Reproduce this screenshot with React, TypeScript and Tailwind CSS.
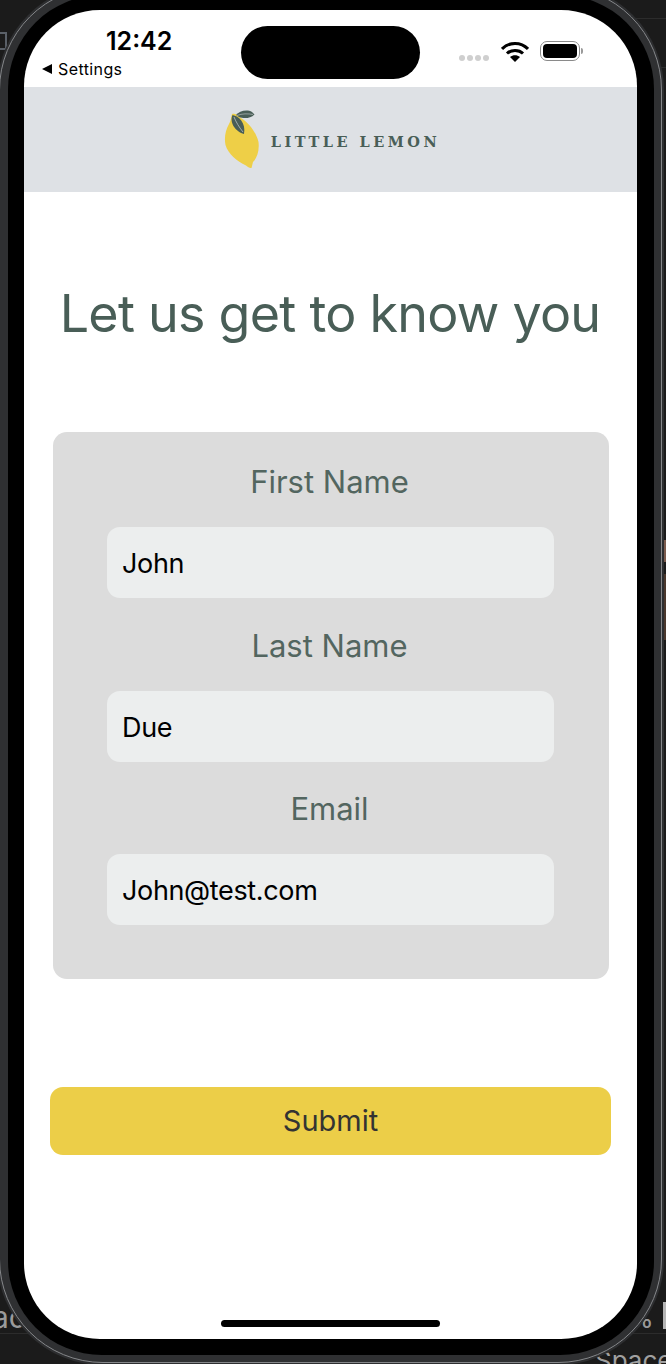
const sans = 'font-["Inter","Liberation_Sans",sans-serif]'

function Lemon() {
  return (
    <svg width="36" height="60" viewBox="0 0 36 60" className="block">
      <path
        d="M8 4 C11 3 14 5 17 8 C25 13 32 22 34.500 32 C35.500 41 33 48 29 52 L27.500 58 C25.500 58.500 24 57 22 55.500 C13 51 4 44 1.500 35 C0 28 1.500 20 5 14 C7 11 7 7 8 4 Z"
        fill="#eecf47"
      />
      <path d="M8.500 5 C15 6 22 13 20 24 C12 22 5 13 8.500 5 Z" fill="#495e57" />
      <path d="M12 5 C15 1 23 -1 28 2 L30.500 4.500 C26 9 19 8.500 15 7 Z" fill="#495e57" />
      <path d="M10 7 C12 12 15 17 19 22" stroke="#dee1e5" strokeWidth="0.600" fill="none" />
      <path d="M13 5.500 C18 3.500 24 3.500 29 4.500" stroke="#dee1e5" strokeWidth="0.500" fill="none" />
    </svg>
  )
}

function Field({ label, value }: { label: string; value: string }) {
  return (
    <div className="flex flex-col items-center">
      <div className="h-[39px] pr-[2px] text-[31px] leading-[39px] text-[#536660]">{label}</div>
      <div className="mt-[26px] flex h-[71px] w-[447px] items-center rounded-[13px] bg-[#eceeee] pl-[15px] pt-[4px] text-[27px] tracking-[-0.350px] text-black">
        {value}
      </div>
    </div>
  )
}

export default function App() {
  return (
    <div className={`relative h-[1364px] w-[666px] overflow-hidden bg-[#1b1b1b] ${sans}`}>
      {/* bits of the desktop showing round the phone */}
      <div className="absolute bottom-[30px] left-0 right-0 h-px bg-[#2c2c2c]" />
      <div className="absolute right-0 top-[18px] h-px w-[40px] bg-[#2c2c2c]" />
      <div className="absolute right-0 top-[67px] h-px w-[30px] bg-[#2c2c2c]" />
      <div className="absolute left-[-4px] top-[32px] h-[18px] w-[11px] border-2 border-[#5a6068]" />
      <div className="absolute left-[-8px] top-[1299px] text-[30px] leading-[36px] text-[#9a9a9a]">ac</div>
      <div className="absolute right-[12px] top-[1300px] text-[28px] leading-[36px] text-[#9a9a9a]">%</div>
      <div className="absolute right-0 top-[1302px] h-[27px] w-[3px] bg-[#b5b5b5]" />
      <div className="absolute left-[595px] top-[1343px] text-[26px] leading-[36px] text-[#a0a0a0]">Space</div>
      <div className="absolute right-0 top-[540px] h-[22px] w-[2px] bg-[#7a5a4c]" />
      <div className="absolute right-0 top-[574px] h-[66px] w-[2px] bg-[#4a372c]" />

      {/* phone shell, sits over the desktop behind it */}
      <div className="absolute left-[-3px] top-[-16px] h-[1381px] w-[667px] rounded-[106px] bg-[#2d2e30] p-[2px]">
        <div className="h-full w-full rounded-[104px] border-[1.500px] border-[#85878a] bg-[#2f3032] p-[7.500px]">
          <div className="h-full w-full rounded-[94px] bg-black" />
        </div>
      </div>

      <div className="absolute left-[24px] top-[10px] flex h-[1329px] w-[613px] flex-col overflow-hidden rounded-[76px] bg-white">
        <div className="relative h-[77px] shrink-0">
          <div className="absolute left-[82px] top-[15px] text-[25px] font-semibold leading-[32px] text-black">12:42</div>
          <div className="absolute left-[18px] top-[49px] flex items-center gap-[6px] text-[16px] leading-[20px] tracking-[0.400px] text-black">
            <span className="h-0 w-0 border-y-[5px] border-r-[10px] border-y-transparent border-r-black" />
            Settings
          </div>
          <div className="absolute left-[217px] top-[16px] h-[53px] w-[179px] rounded-full bg-black" />
          <div className="absolute left-[435px] top-[45px] flex gap-[2px]">
            <span className="size-[6px] rounded-full bg-[#cfcfcf]" />
            <span className="size-[6px] rounded-full bg-[#cfcfcf]" />
            <span className="size-[6px] rounded-full bg-[#cfcfcf]" />
            <span className="size-[6px] rounded-full bg-[#cfcfcf]" />
          </div>
          <svg width="28" height="21" viewBox="0 0 28 21" className="absolute left-[477px] top-[31px]">
            <path d="M1 8 C8 0.500 20 0.500 27 8" stroke="#000" strokeWidth="3" fill="none" />
            <path d="M6 12.500 C10 8.500 18 8.500 22 12.500" stroke="#000" strokeWidth="3" fill="none" />
            <path d="M9 16 L14 21 L19 16 C16 13.500 12 13.500 9 16 Z" fill="#000" />
          </svg>
          <div className="absolute left-[516px] top-[31px] flex h-[20px] w-[40px] items-center justify-center rounded-[7px] border-[1.500px] border-[#8a8a8a] p-[2px]">
            <div className="h-full w-full rounded-[4px] bg-black" />
          </div>
          <div className="absolute left-[557px] top-[38px] h-[6px] w-[2px] rounded-r-full bg-[#9a9a9a]" />
        </div>

        <header className="flex h-[105px] shrink-0 items-center justify-center gap-[11px] bg-[#dee1e5] pl-[3px]">
          <Lemon />
          <span className='pt-[5px] font-["DejaVu_Serif",serif] text-[14.500px] font-bold tracking-[3.500px] text-[#495e57]'>
            LITTLE LEMON
          </span>
        </header>

        <h1 className="mt-[85px] h-[74px] pr-[1px] text-center text-[52px] font-normal leading-[74px] tracking-[-0.750px] text-[#495e57]">
          Let us get to know you
        </h1>

        <form className="ml-[28.500px] mr-[28.500px] mt-[81px] flex h-[547px] flex-col gap-[27.500px] rounded-[14px] bg-[#dcdcdc] pt-[30px]">
          <Field label="First Name" value="John" />
          <Field label="Last Name" value="Due" />
          <Field label="Email" value="John@test.com" />
        </form>

        <button className="mx-[26px] mt-[108px] h-[68px] rounded-[13px] bg-[#ecce48] text-[29px] text-[#333]">
          Submit
        </button>

        <div className="mx-auto mt-[165px] h-[7px] w-[219px] rounded-full bg-black" />
      </div>
    </div>
  )
}
